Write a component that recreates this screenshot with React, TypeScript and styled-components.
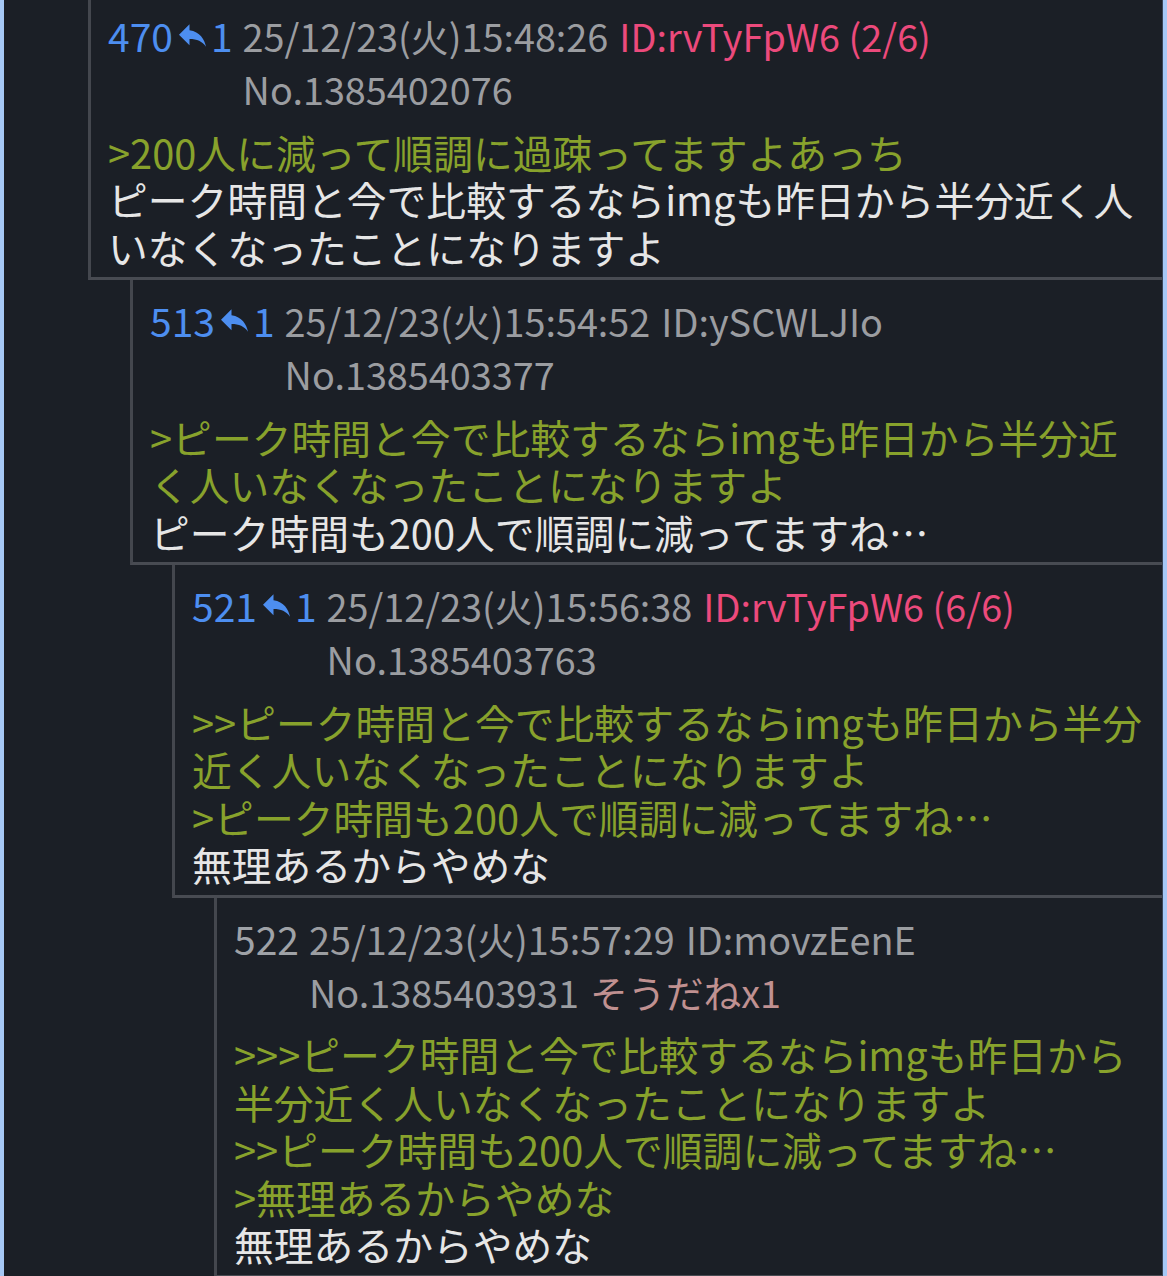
import React from "react";
import styled, { createGlobalStyle } from "styled-components";

const Global = createGlobalStyle`
  html, body {
    margin: 0;
    padding: 0;
    overflow: hidden;
    background: #a6c8f5;
  }
  body {
    font-family: "Noto Sans CJK JP", "Noto Sans", sans-serif;
  }
`;

const Page = styled.div`
  margin: 0 4px;
  min-height: 1276px;
  background: #1b1f26;
  border-right: 1px solid #3a4658;
  overflow: hidden;
`;

const Thread = styled.div`
  display: flex;
  flex-direction: column;
  margin-top: -5px;
`;

const Post = styled.article<{ $indent: number }>`
  margin-left: ${(p) => p.$indent}px;
  border-left: 3px solid #44474e;
  border-bottom: 3px solid #484b52;
  padding: 17px 14px 7px 17px;
  line-height: 47.5px;
`;

const Header = styled.header`
  display: flex;
  align-items: flex-start;
  font-size: 37.8px;
`;

const NumGroup = styled.div<{ $hasReplies: boolean }>`
  display: flex;
  align-items: center;
  font-size: 39px;
  color: ${(p) => (p.$hasReplies ? "#4d8ef0" : "#9fa2a7")};
  margin-right: 10px;
  white-space: nowrap;
`;

const ReplyIcon = styled.svg`
  width: 27px;
  height: 23px;
  margin: 0 5px 0 6px;
  fill: #4d8ef0;
`;

const Meta = styled.div`
  display: flex;
  flex-direction: column;
  row-gap: 5.5px;
`;

const MetaRow = styled.div`
  display: flex;
  flex-wrap: wrap;
  column-gap: 11px;
  white-space: nowrap;
`;

const MetaText = styled.span<{ $tone?: "gray" | "pink" | "soudane" }>`
  color: ${(p) =>
    p.$tone === "pink" ? "#ec4a7c" : p.$tone === "soudane" ? "#c09191" : "#9b9da1"};
`;

const Body = styled.div`
  margin-top: 15px;
  font-size: 39.8px;
`;

const Line = styled.div<{ $quote: boolean }>`
  color: ${(p) => (p.$quote ? "#88a22c" : "#e6e6e6")};
`;

type PostData = {
  num: string;
  replies?: number;
  date: string;
  id: string;
  idHot: boolean;
  no: string;
  soudane?: string;
  lines: string[];
  indent: number;
};

const posts: PostData[] = [
  {
    num: "470",
    replies: 1,
    date: "25/12/23(火)15:48:26",
    id: "ID:rvTyFpW6 (2/6)",
    idHot: true,
    no: "No.1385402076",
    lines: [
      ">200人に減って順調に過疎ってますよあっち",
      "ピーク時間と今で比較するならimgも昨日から半分近く人いなくなったことになりますよ",
    ],
    indent: 84,
  },
  {
    num: "513",
    replies: 1,
    date: "25/12/23(火)15:54:52",
    id: "ID:ySCWLJIo",
    idHot: false,
    no: "No.1385403377",
    lines: [
      ">ピーク時間と今で比較するならimgも昨日から半分近く人いなくなったことになりますよ",
      "ピーク時間も200人で順調に減ってますね…",
    ],
    indent: 126,
  },
  {
    num: "521",
    replies: 1,
    date: "25/12/23(火)15:56:38",
    id: "ID:rvTyFpW6 (6/6)",
    idHot: true,
    no: "No.1385403763",
    lines: [
      ">>ピーク時間と今で比較するならimgも昨日から半分近く人いなくなったことになりますよ",
      ">ピーク時間も200人で順調に減ってますね…",
      "無理あるからやめな",
    ],
    indent: 168,
  },
  {
    num: "522",
    date: "25/12/23(火)15:57:29",
    id: "ID:movzEenE",
    idHot: false,
    no: "No.1385403931",
    soudane: "そうだねx1",
    lines: [
      ">>>ピーク時間と今で比較するならimgも昨日から半分近く人いなくなったことになりますよ",
      ">>ピーク時間も200人で順調に減ってますね…",
      ">無理あるからやめな",
      "無理あるからやめな",
    ],
    indent: 210,
  },
];

const Reply = () => (
  <ReplyIcon viewBox="3 5 18 15" aria-hidden>
    <path d="M10 9V5l-7 7 7 7v-4.1c5 0 8.5 1.6 11 5.1-1-5-4-10-11-11z" />
  </ReplyIcon>
);

export default function App() {
  return (
    <>
      <Global />
      <Page>
        <Thread>
          {posts.map((p) => (
            <Post key={p.num} $indent={p.indent}>
              <Header>
                <NumGroup $hasReplies={!!p.replies}>
                  <span>{p.num}</span>
                  {p.replies ? (
                    <>
                      <Reply />
                      <span>{p.replies}</span>
                    </>
                  ) : null}
                </NumGroup>
                <Meta>
                  <MetaRow>
                    <MetaText>{p.date}</MetaText>
                    <MetaText $tone={p.idHot ? "pink" : "gray"}>{p.id}</MetaText>
                  </MetaRow>
                  <MetaRow>
                    <MetaText>{p.no}</MetaText>
                    {p.soudane && <MetaText $tone="soudane">{p.soudane}</MetaText>}
                  </MetaRow>
                </Meta>
              </Header>
              <Body>
                {p.lines.map((l, i) => (
                  <Line key={i} $quote={l.startsWith(">")}>
                    {l}
                  </Line>
                ))}
              </Body>
            </Post>
          ))}
        </Thread>
      </Page>
    </>
  );
}
